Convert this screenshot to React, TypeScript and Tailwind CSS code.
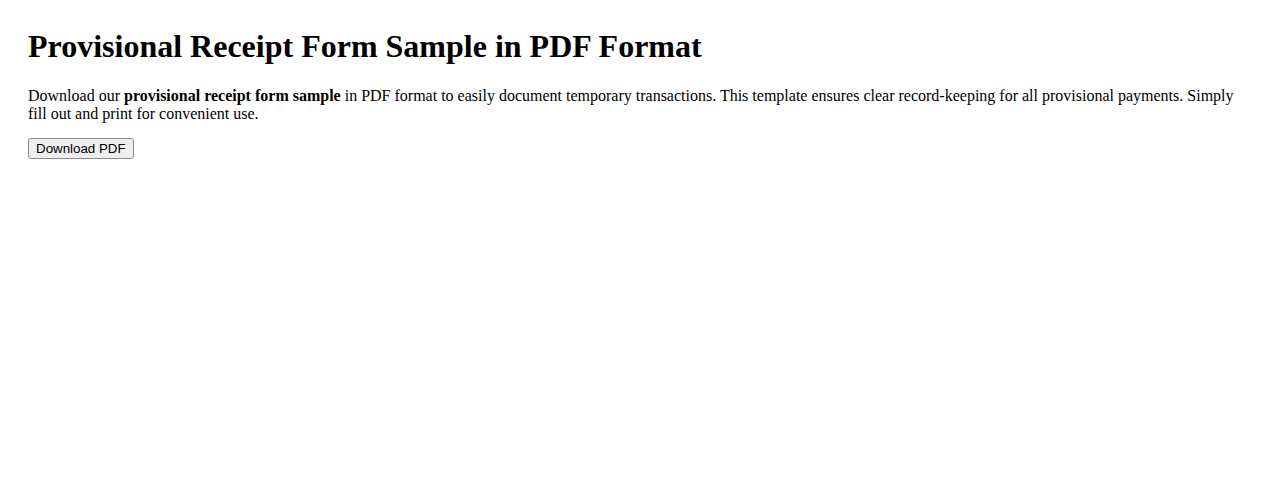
export default function App() {
  return (
    <div className="bg-white min-h-screen px-[28px] pt-[28px] text-black" style={{ fontFamily: '"Liberation Serif", "Times New Roman", serif' }}>
      <h1 className="text-[32px] font-bold leading-[normal] mb-[22px]">
        Provisional Receipt Form Sample in PDF Format
      </h1>
      <p className="text-[16px] leading-[normal] mb-[13px]">
        Download our <strong className="font-bold">provisional receipt form sample</strong> in PDF format to easily document temporary transactions. This template ensures clear record-keeping for all provisional payments. Simply fill out and print for convenient use.
      </p>
      <button
        className="bg-[#efefef] border border-[#8a8a8a] rounded-[3px] px-[7px] py-[2px] text-[13.33px] leading-[normal] text-black"
        style={{ fontFamily: '"Liberation Sans", Arial, sans-serif' }}
      >
        Download PDF
      </button>
    </div>
  );
}
